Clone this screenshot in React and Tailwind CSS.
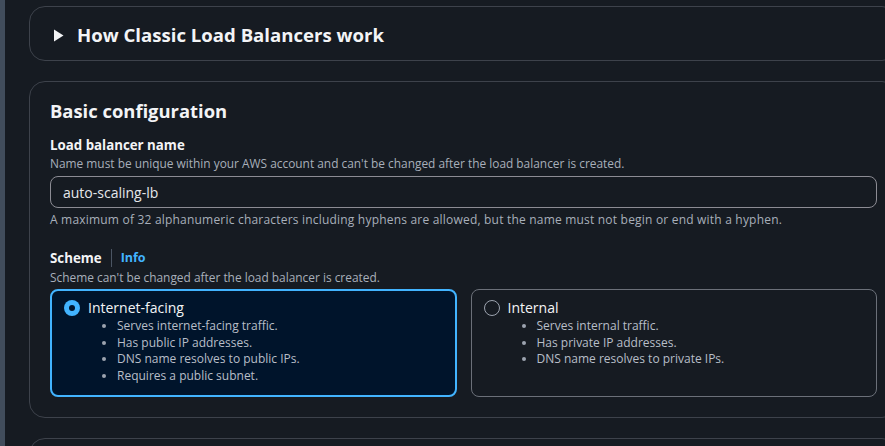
export default function App() {
  const facing = [
    'Serves internet-facing traffic.',
    'Has public IP addresses.',
    'DNS name resolves to public IPs.',
    'Requires a public subnet.',
  ];
  const internal = [
    'Serves internal traffic.',
    'Has private IP addresses.',
    'DNS name resolves to private IPs.',
  ];

  return (
    <div
      className="flex h-[446px] w-[885px] overflow-hidden bg-[#161b22] text-[#d1d5db]"
      style={{ fontFamily: '"Open Sans", "Noto Sans", sans-serif' }}
    >
      <div className="w-[5px] shrink-0 bg-[#414d5c]" />
      <div className="w-[893px] shrink-0 pl-[24px] pt-[6px]">
        {/* Collapsed section */}
        <div className="flex h-[55px] items-center gap-[13px] rounded-[16px] border border-[#3d424b] pl-[23px] pt-[3px]">
          <svg width="11" height="13" viewBox="0 0 11 13">
            <path d="M1 0.5 L10.5 6.5 L1 12.5 Z" fill="#f3f4f6" />
          </svg>
          <span className="text-[18.6px] font-bold text-[#f3f4f6]">How Classic Load Balancers work</span>
        </div>

        {/* Basic configuration */}
        <div className="mt-[20px] rounded-[16px] border border-[#3d424b] px-[20px] pb-[20px] pt-[15px]">
          <h2 className="text-[18.4px] font-bold leading-[28px] text-[#f3f4f6]">Basic configuration</h2>

          <div className="mt-[11px]">
            <div className="text-[13.3px] font-bold leading-[18px] text-[#f3f4f6]">Load balancer name</div>
            <div className="text-[11.9px] leading-[18px] text-[#a8afba]">
              Name must be unique within your AWS account and can't be changed after the load balancer is created.
            </div>
            <div className="mt-[4px] flex h-[32px] items-center rounded-[8px] border border-[#8c8c94] px-[12px] text-[14px] text-[#e5e7eb]">
              auto-scaling-lb
            </div>
            <div className="mt-[3px] text-[12px] tracking-[0.2px] leading-[18px] text-[#a8afba]">
              A maximum of 32 alphanumeric characters including hyphens are allowed, but the name must not begin or end with a hyphen.
            </div>
          </div>

          <div className="mt-[20px]">
            <div className="flex items-center text-[13.3px] leading-[18px]">
              <span className="font-bold text-[#f3f4f6]">Scheme</span>
              <span className="mx-[9px] h-[18px] w-px bg-[#4b5563]" />
              <span className="text-[12.5px] font-bold text-[#42b4ff]">Info</span>
            </div>
            <div className="mt-[1px] text-[11.9px] leading-[18px] text-[#a8afba]">
              Scheme can't be changed after the load balancer is created.
            </div>

            <div className="mt-[3px] grid grid-cols-2 gap-[14px]">
              <div className="h-[108px] rounded-[8px] border-2 border-[#42b4ff] bg-[#00142b] pl-[12px] pt-[8px]">
                <div className="flex items-center gap-[8px]">
                  <span className="flex h-[16px] w-[16px] items-center justify-center rounded-full bg-[#42b4ff]">
                    <span className="h-[6px] w-[6px] rounded-full bg-[#00142b]" />
                  </span>
                  <span className="text-[14px] leading-[18px] text-[#f3f4f6]">Internet-facing</span>
                </div>
                <ul className="mt-[1px] list-disc pl-[53px] text-[12px] leading-[16.5px] text-[#b8bec8] marker:text-[#9ca3af]">
                  {facing.map((t) => (
                    <li key={t}>{t}</li>
                  ))}
                </ul>
              </div>
              <div className="h-[108px] rounded-[8px] border border-[#6b7079] pl-[12px] pt-[9px]">
                <div className="flex items-center gap-[8px]">
                  <span className="h-[16px] w-[16px] rounded-full border border-[#9ca3af]" />
                  <span className="text-[14px] leading-[18px] text-[#f3f4f6]">Internal</span>
                </div>
                <ul className="mt-[1px] list-disc pl-[53px] text-[12px] leading-[16.5px] text-[#b8bec8] marker:text-[#9ca3af]">
                  {internal.map((t) => (
                    <li key={t}>{t}</li>
                  ))}
                </ul>
              </div>
            </div>
          </div>
        </div>

        <div className="mt-[20px] h-[40px] rounded-t-[16px] border border-[#3d424b]" />
      </div>
    </div>
  );
}
